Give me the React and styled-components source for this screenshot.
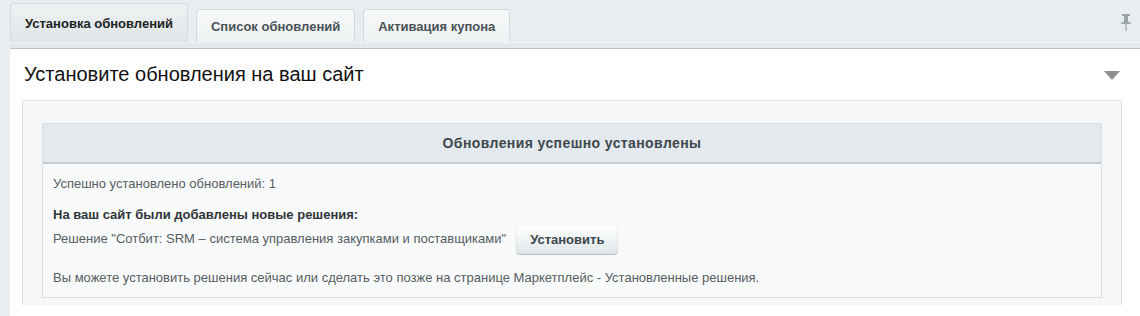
import styled, { createGlobalStyle } from 'styled-components';

const GlobalStyle = createGlobalStyle`
  html, body {
    margin: 0;
    padding: 0;
    background: #e8edef;
  }
  body {
    font-family: "Liberation Sans", Arial, sans-serif;
  }
`;

const Page = styled.div`
  width: 1140px;
  height: 316px;
  overflow: hidden;
  background: #e8edef;
`;

const TabBar = styled.div`
  display: flex;
  align-items: flex-end;
  gap: 8px;
  height: 42px;
  padding-left: 10px;
`;

const Tab = styled.div`
  display: flex;
  align-items: center;
  box-sizing: border-box;
  height: ${(p) => (p.$active ? '39px' : '33px')};
  padding: 0 14px;
  border: 1px solid #d3dadd;
  border-bottom: none;
  border-radius: 4px 4px 0 0;
  background: ${(p) =>
    p.$active
      ? 'linear-gradient(to bottom, #eef2f3 0%, #dfe5e7 100%)'
      : 'linear-gradient(to bottom, #f7f9f9 0%, #eef1f2 100%)'};
  font-size: 13px;
  font-weight: bold;
  color: ${(p) => (p.$active ? '#222' : '#4a5256')};
  white-space: nowrap;
`;

const PinBox = styled.div`
  align-self: flex-start;
  margin: 14px 9px 0 auto;
  display: flex;
`;

const Panel = styled.div`
  margin-left: 10px;
  background: #fff;
  height: 274px;
`;

const Strip = styled.div`
  height: 5px;
  background: #e3e8ea;
  border-top: 1px solid #f1f3f4;
  border-bottom: 1px solid #b9c1c4;
`;

const PanelHead = styled.div`
  display: flex;
  align-items: center;
  justify-content: space-between;
  height: 51px;
  padding: 0 20px 0 14px;
`;

const Title = styled.h1`
  margin: 0;
  font-size: 20px;
  font-weight: normal;
  color: #111;
`;

const Triangle = styled.div`
  width: 0;
  height: 0;
  border-left: 8px solid transparent;
  border-right: 8px solid transparent;
  border-top: 9px solid #8d9295;
  margin-top: 2px;
`;

const Content = styled.div`
  margin: 0 18px 0 12px;
  background: #f5f7f8;
  border: 1px solid #dde3e6;
  border-bottom: none;
  padding: 22px 19px 7px 19px;
`;

const Notice = styled.div`
  border: 1px solid #d8dee1;
  background: #f9fafb;
`;

const NoticeHead = styled.div`
  height: 38px;
  display: flex;
  align-items: center;
  justify-content: center;
  background: #e3e9ec;
  border-bottom: 2px solid #c5cbce;
  font-size: 14px;
  font-weight: bold;
  color: #3d474c;
  letter-spacing: 0.4px;
`;

const NoticeBody = styled.div`
  padding: 12px 10px 11px 10px;
  font-size: 13px;
  color: #565d61;
  line-height: 16px;
`;

const Line = styled.div`
  margin-top: ${(p) => p.$gap || 0}px;
  font-weight: ${(p) => (p.$bold ? 'bold' : 'normal')};
  color: ${(p) => (p.$bold ? '#2f3538' : '#565d61')};
`;

const Row = styled.div`
  display: flex;
  align-items: center;
  gap: 10px;
  margin-top: 1px;
  height: 30px;
`;

const Button = styled.button`
  height: 29px;
  padding: 0 14px;
  border: none;
  border-radius: 4px;
  background: linear-gradient(to bottom, #ffffff 0%, #f0f3f4 50%, #dfe5e7 100%);
  box-shadow: 0 1px 1px rgba(0, 0, 0, 0.25), inset 0 0 0 1px rgba(0, 0, 0, 0.03);
  font-family: "Liberation Sans", Arial, sans-serif;
  font-size: 13px;
  font-weight: bold;
  color: #3b464d;
  cursor: pointer;
`;

function Pin() {
  return (
    <svg width="10" height="17" viewBox="0 0 10 17">
      <rect x="1" y="0" width="8" height="2" fill="#9aa3a7" />
      <rect x="3" y="2" width="4" height="6" fill="#9aa3a7" />
      <rect x="0.5" y="8" width="9" height="2" fill="#9aa3a7" />
      <rect x="4.3" y="10" width="1.4" height="7" fill="#a7afb3" />
    </svg>
  );
}

export default function App() {
  return (
    <Page>
      <GlobalStyle />
      <TabBar>
        <Tab $active>Установка обновлений</Tab>
        <Tab>Список обновлений</Tab>
        <Tab>Активация купона</Tab>
        <PinBox>
          <Pin />
        </PinBox>
      </TabBar>
      <Panel>
        <Strip />
        <PanelHead>
          <Title>Установите обновления на ваш сайт</Title>
          <Triangle />
        </PanelHead>
        <Content>
          <Notice>
            <NoticeHead>Обновления успешно установлены</NoticeHead>
            <NoticeBody>
              <Line>Успешно установлено обновлений: 1</Line>
              <Line $bold $gap={15}>На ваш сайт были добавлены новые решения:</Line>
              <Row>
                <span>Решение "Сотбит: SRM – система управления закупками и поставщиками"</span>
                <Button>Установить</Button>
              </Row>
              <Line $gap={16}>
                Вы можете установить решения сейчас или сделать это позже на странице Маркетплейс - Установленные решения.
              </Line>
            </NoticeBody>
          </Notice>
        </Content>
      </Panel>
    </Page>
  );
}
